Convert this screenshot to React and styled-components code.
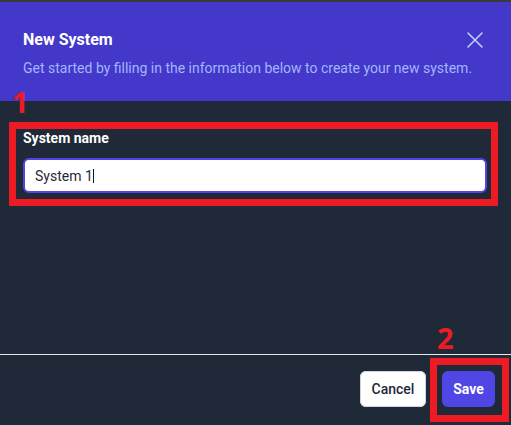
import React from "react";
import styled, { createGlobalStyle } from "styled-components";

const GlobalStyle = createGlobalStyle`
  html, body {
    margin: 0;
    padding: 0;
    background: #1f2937;
  }
  body {
    font-family: Roboto, "Noto Sans", "Liberation Sans", sans-serif;
    -webkit-font-smoothing: antialiased;
  }
  * { box-sizing: border-box; }
`;

const Panel = styled.div`
  width: 511px;
  height: 425px;
  display: flex;
  flex-direction: column;
  border-top: 2px solid #3a3a3c;
  background: #1f2937;
  overflow: hidden;
`;

const Header = styled.header`
  background: #4338ca;
  padding: 26px 24px 23px 23px;
`;

const TitleRow = styled.div`
  display: flex;
  align-items: flex-start;
  justify-content: space-between;
`;

const Title = styled.h2`
  margin: 0;
  font-size: 16px;
  line-height: 24px;
  font-weight: 700;
  color: #ffffff;
`;

const CloseButton = styled.button`
  width: 24px;
  height: 24px;
  margin-top: 0;
  padding: 0;
  border: 0;
  background: transparent;
  color: #c7d2fe;
  display: flex;
  align-items: center;
  justify-content: center;
  cursor: pointer;
`;

const Subtitle = styled.p`
  margin: 6px 0 0;
  font-size: 14px;
  line-height: 20px;
  color: #a5b4fc;
  white-space: nowrap;
`;

const Body = styled.main`
  flex: 1;
  position: relative;
  padding: 21px 13px 0 9px;
`;

const Marker = styled.span`
  position: absolute;
  left: ${(p) => p.$left}px;
  top: ${(p) => p.$top}px;
  font-family: "Noto Sans", "Liberation Sans", sans-serif;
  font-size: 29px;
  line-height: 29px;
  font-weight: 700;
  color: #ed1c24;
  pointer-events: none;
`;

const Highlight = styled.div`
  border: 7px solid #ed1c24;
  padding: 0 4px 6px 7px;
`;

const Label = styled.label`
  display: block;
  font-size: 14px;
  line-height: 18px;
  font-weight: 700;
  color: #ffffff;
`;

const InputBox = styled.div`
  margin-top: 11px;
  height: 35px;
  background: #ffffff;
  border: 2px solid #4f46e5;
  border-radius: 6px;
  padding: 0 10px;
  display: flex;
  align-items: center;
  font-size: 14px;
  color: #1f2937;
`;

const Caret = styled.span`
  display: inline-block;
  width: 1px;
  height: 14px;
  margin-left: 0;
  background: #111827;
`;

const Footer = styled.footer`
  border-top: 1px solid #e5e7eb;
  padding: 16px 16px 18px;
  display: flex;
  justify-content: flex-end;
  gap: 16px;
`;

const ButtonWrap = styled.div`
  position: relative;
`;

const Button = styled.button`
  width: ${(p) => p.$width}px;
  height: 36px;
  padding: 0;
  border: 0;
  border-radius: 6px;
  display: flex;
  align-items: center;
  justify-content: center;
  font-family: Roboto, "Noto Sans", "Liberation Sans", sans-serif;
  font-size: 14px;
  font-weight: ${(p) => (p.$primary ? 700 : 500)};
  background: ${(p) => (p.$primary ? "#4f46e5" : "#ffffff")};
  color: ${(p) => (p.$primary ? "#ffffff" : "#1f2937")};
  box-shadow: ${(p) => (p.$primary ? "none" : "inset 0 0 0 1px #d1d5db")};
  cursor: pointer;
`;

const Frame = styled.div`
  position: absolute;
  left: -12px;
  right: -14px;
  top: -13px;
  bottom: -15px;
  border: 7px solid #ed1c24;
  pointer-events: none;
`;

export default function App() {
  return (
    <>
      <GlobalStyle />
      <Panel>
        <Header>
          <TitleRow>
            <Title>New System</Title>
            <CloseButton aria-label="Close">
              <svg width="24" height="24" viewBox="0 0 24 24" fill="none">
                <path d="M5 5L19 19M19 5L5 19" stroke="currentColor" strokeWidth="1.5" strokeLinecap="round" />
              </svg>
            </CloseButton>
          </TitleRow>
          <Subtitle>Get started by filling in the information below to create your new system.</Subtitle>
        </Header>
        <Body>
          <Marker $left={12} $top={-14}>1</Marker>
          <Highlight>
            <Label>System name</Label>
            <InputBox>
              System 1<Caret />
            </InputBox>
          </Highlight>
        </Body>
        <Footer>
          <Button $width={66}>Cancel</Button>
          <ButtonWrap>
            <Marker $left={-5} $top={-48}>2</Marker>
            <Button $primary $width={53}>Save</Button>
            <Frame />
          </ButtonWrap>
        </Footer>
      </Panel>
    </>
  );
}
